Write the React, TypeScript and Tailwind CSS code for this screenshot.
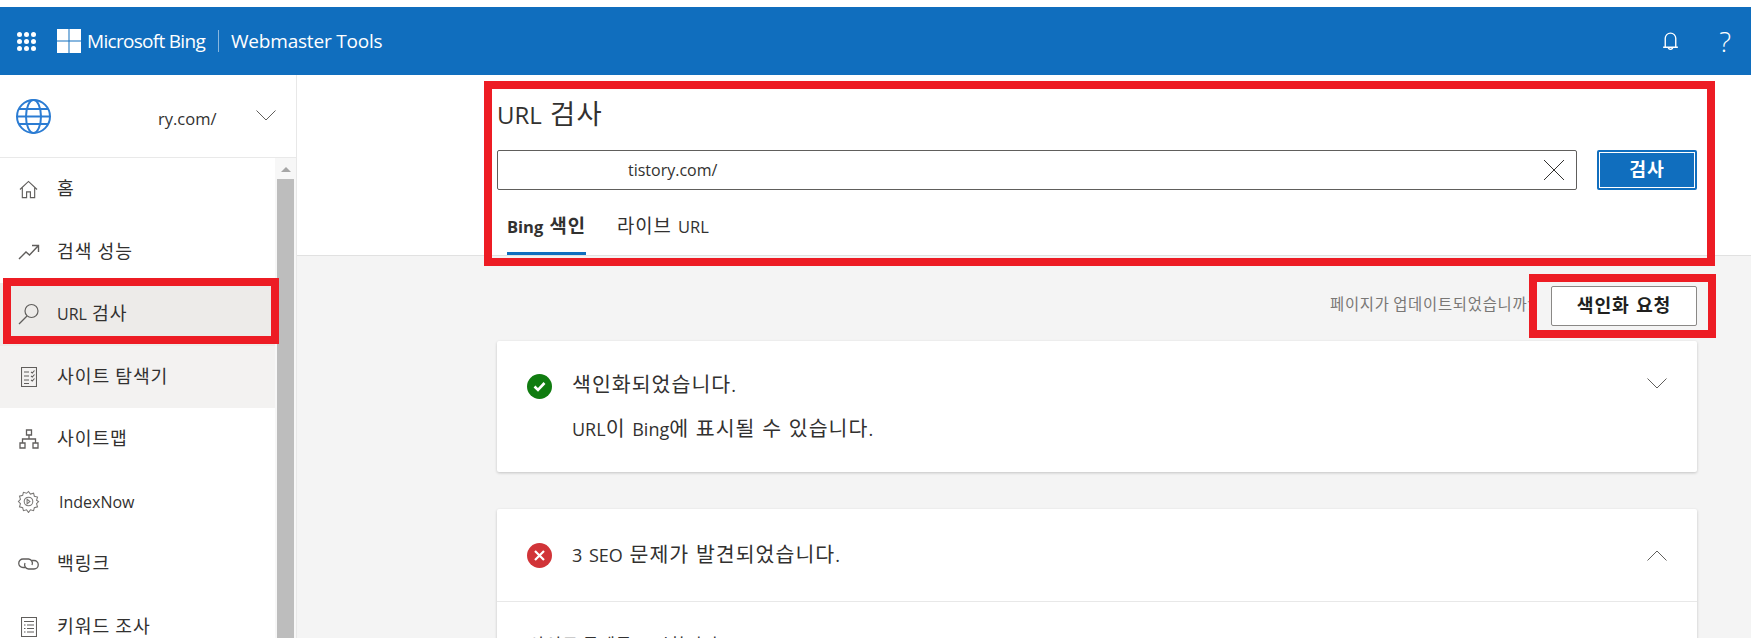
import type { ReactNode } from 'react';

const font = "font-['Open_Sans','Noto_Sans_CJK_KR',sans-serif]";

// hangul runs a bit larger and wider than the latin around them
function Ko({ text }: { text: string }) {
  return (
    <>
      {text.split(/([\uac00-\ud7a3]+)/).map((part, i) =>
        i % 2 === 1 ? (
          <span key={i} className="text-[1.14em] tracking-[0.05em] leading-[1]">
            {part}
          </span>
        ) : (
          part
        ),
      )}
    </>
  );
}

function Chevron({ up, className }: { up?: boolean; className?: string }) {
  return (
    <svg className={className} width="20" height="11" viewBox="0 0 20 11" fill="none" stroke="#605e5c" strokeWidth="1">
      <path d={up ? 'M.5 10.500 10 1l9.500 9.500' : 'M.5.500 10 10 19.500.500'} />
    </svg>
  );
}

function HomeIcon() {
  return (
    <svg width="19" height="19" viewBox="0 0 20 20" fill="none" stroke="#605e5c" strokeWidth="1.2">
      <path d="M1 10 10 1.500 19 10M3.500 8v10.500h4.500v-6h4v6h4.500V8" />
    </svg>
  );
}

function TrendIcon() {
  return (
    <svg width="22" height="16" viewBox="0 0 22 16" fill="none" stroke="#605e5c" strokeWidth="1.4">
      <path d="M1 15 8 8l3.500 3L20 2M14 1.500h6.500V8" />
    </svg>
  );
}

function SearchIcon() {
  return (
    <svg width="22" height="22" viewBox="0 0 22 22" fill="none" stroke="#605e5c" strokeWidth="1.2">
      <circle cx="13.500" cy="8" r="6.500" />
      <path d="M9 13 1 21" />
    </svg>
  );
}

function ExplorerIcon() {
  return (
    <svg width="16" height="20" viewBox="0 0 16 20" fill="none" stroke="#605e5c" strokeWidth="1.1">
      <path d="M.5.500h15v19H.5zM3 5h5M3 9h5M3 13h5M3 16.500h5M10 5l1.300 1L13.500 3.500M10 9l1.300 1 2.200-2.500M10 13l1.300 1 2.200-2.500" />
    </svg>
  );
}

function SitemapIcon() {
  return (
    <svg width="20" height="20" viewBox="0 0 20 20" fill="none" stroke="#605e5c" strokeWidth="1.3">
      <path d="M7.500 1h5v5h-5zM1 14h5v5H1zM14 14h5v5h-5zM10 6v4M3.500 14v-4h13v4" />
    </svg>
  );
}

function GearIcon() {
  return (
    <svg width="23" height="23" viewBox="0 0 24 24" fill="none" stroke="#797775" strokeWidth="1.1">
      <path d="M12 1.500l2 2.800 3.300-1 .8 3.200 3.300.9-1 3.200L22.500 12l-2.100 2.300 1 3.200-3.300.9-.8 3.200-3.300-1-2 2.900-2-2.900-3.300 1-.8-3.200-3.300-.9 1-3.200L1.500 12l2.100-2.300-1-3.200 3.300-.9.800-3.200 3.300 1z" />
      <circle cx="12" cy="12" r="4.500" />
      <path d="M10.500 9.500 13.500 12l-3 2.500z" />
    </svg>
  );
}

function LinkIcon() {
  return (
    <svg width="21" height="14" viewBox="0 0 21 14" fill="none" stroke="#605e5c" strokeWidth="1.3">
      <path d="M7.500 10.500H5A4.200 4.200 0 0 1 5 2h5.500a4.200 4.200 0 0 1 3.500 6" />
      <path d="M13.500 3.500H16a4.200 4.200 0 0 1 0 8.500h-5.500A4.200 4.200 0 0 1 7 6" />
    </svg>
  );
}

function DocIcon() {
  return (
    <svg width="16" height="20" viewBox="0 0 16 20" fill="none" stroke="#605e5c" strokeWidth="1.1">
      <path d="M.5.500h15v19H.5zM3 4.500h10M3 8h1.500M6 8h7M3 11.500h1.500M6 11.500h7M3 15h1.500M6 15h7" />
    </svg>
  );
}

type NavItem = { label: string; icon: ReactNode; bg?: string; indent?: string; marked?: boolean };

const navItems: NavItem[] = [
  { label: '홈', icon: <HomeIcon /> },
  { label: '검색 성능', icon: <TrendIcon /> },
  { label: 'URL 검사', icon: <SearchIcon />, bg: 'bg-[#edebe9]', marked: true },
  { label: '사이트 탐색기', icon: <ExplorerIcon />, bg: 'bg-[#f3f2f1]' },
  { label: '사이트맵', icon: <SitemapIcon /> },
  { label: 'IndexNow', icon: <GearIcon />, indent: 'pl-[2px]' },
  { label: '백링크', icon: <LinkIcon /> },
  { label: '키워드 조사', icon: <DocIcon /> },
];

function Sidebar() {
  return (
    <aside className="w-[297px] shrink-0 border-r border-[#e8e8e8] bg-white flex flex-col overflow-hidden">
      <div className="h-[83px] shrink-0 flex items-center border-b border-[#e9e9e9] pl-[16px] pr-[20px]">
        <svg width="35" height="35" viewBox="0 0 35 35" fill="none" stroke="#2b7cd3" strokeWidth="2">
          <circle cx="17.500" cy="17.500" r="16.500" />
          <ellipse cx="17.500" cy="17.500" rx="7.500" ry="16.500" />
          <path d="M3 10h29M3 25h29M1 17.500h33" />
        </svg>
        <span className="ml-[107px] text-[16.500px] text-[#323130] relative top-[3px]">ry.com/</span>
        <Chevron className="ml-auto -mt-[2px]" />
      </div>
      <div className="flex-1 flex min-h-0">
        <nav className="flex-1 min-w-0">
          {navItems.map((item) => (
            <div key={item.label} className={`relative h-[62.500px] flex items-center ${item.bg ?? ''}`}>
              <span className="w-[57px] shrink-0 flex justify-center">{item.icon}</span>
              <span className={`text-[16px] text-[#323130] [word-spacing:1px] ${item.indent ?? ''}`}>
                <Ko text={item.label} />
              </span>
              {item.marked && (
                <div className="absolute left-[3px] -top-[5px] w-[276px] h-[66px] border-[8px] border-[#ed1c24] z-10" />
              )}
            </div>
          ))}
        </nav>
        <div className="w-[21px] shrink-0 bg-[#f7f7f7] flex flex-col items-center pt-[9px]">
          <div className="w-0 h-0 border-x-[5px] border-x-transparent border-b-[5px] border-b-[#a6a6a6]" />
          <div className="w-[17px] flex-1 mt-[7px] bg-[#bdbdbd]" />
        </div>
      </div>
    </aside>
  );
}

function IndexCard() {
  return (
    <div className="w-[1200px] h-[131px] bg-white rounded-[2px] shadow-[0_1px_3px_rgba(0,0,0,0.2)] flex pt-[30px] pl-[30px] pr-[30px] shrink-0">
      <span className="w-[25px] h-[25px] mt-[3px] rounded-full bg-[#107c10] flex items-center justify-center shrink-0">
        <svg width="13" height="11" viewBox="0 0 13 11" fill="none" stroke="white" strokeWidth="2.600">
          <path d="M1.500 5.500 5 9l6.500-7" />
        </svg>
      </span>
      <div className="ml-[20px] flex-1 text-[18px] text-[#323130] leading-[28px] [word-spacing:2px]">
        <p><Ko text="색인화되었습니다." /></p>
        <p className="mt-[16px]"><Ko text="URL이 Bing에 표시될 수 있습니다." /></p>
      </div>
      <Chevron className="mt-[7px]" />
    </div>
  );
}

function SeoCard() {
  return (
    <div className="w-[1200px] mt-[37px] bg-white rounded-t-[2px] shadow-[0_1px_3px_rgba(0,0,0,0.2)] shrink-0">
      <div className="h-[93px] flex items-center pl-[30px] pr-[30px] border-b border-[#e8e8e8]">
        <span className="w-[25px] h-[25px] rounded-full bg-[#d13438] flex items-center justify-center shrink-0">
          <svg width="11" height="11" viewBox="0 0 11 11" fill="none" stroke="white" strokeWidth="2.200">
            <path d="M1 1l9 9M10 1l-9 9" />
          </svg>
        </span>
        <span className="ml-[20px] flex-1 text-[18px] text-[#323130] [word-spacing:2px]">
          <Ko text="3 SEO 문제가 발견되었습니다." />
        </span>
        <Chevron up />
      </div>
      <p className="pl-[32px] pt-[32px] text-[15px] text-[#323130]">
        <Ko text="사이트 문제를 표시합니다" />
      </p>
    </div>
  );
}

function Main() {
  return (
    <main className="flex-1 min-w-0 flex flex-col bg-[#f4f4f4] overflow-hidden">
      <section className="h-[181px] shrink-0 bg-white border-b border-[#e1e1e1] pl-[200px] pt-[6px]">
        <div className="relative w-[1231px] h-[185px] border-[8px] border-[#ed1c24] -ml-[13px] pl-[5px] pt-[10px] z-10">
          <h1 className="text-[24px] leading-[32px] text-[#323130] [word-spacing:2px]">
            <Ko text="URL 검사" />
          </h1>
          <div className="flex mt-[19px]">
            <div className="w-[1080px] shrink-0 h-[40px] border border-[#605e5c] rounded-[2px] flex items-center justify-between pl-[130px] pr-[12px]">
              <span className="text-[16px] text-[#323130]">tistory.com/</span>
              <svg width="20" height="20" viewBox="0 0 20 20" fill="none" stroke="#323130" strokeWidth="1">
                <path d="M0 0l20 20M20 0 0 20" />
              </svg>
            </div>
            <button className="ml-[20px] w-[100px] shrink-0 h-[40px] bg-[#106ebe] rounded-[2px] outline outline-1 outline-offset-[-3px] outline-white text-white text-[16px] font-bold">
              <Ko text="검사" />
            </button>
          </div>
          <div className="flex mt-[17px] text-[16.500px] text-[#323130] [word-spacing:2px]">
            <div className="ml-[10px] h-[48px] border-b-[3px] border-[#106ebe] font-bold leading-[40px]">
              <Ko text="Bing 색인" />
            </div>
            <div className="ml-[31px] leading-[40px]">
              <Ko text="라이브 URL" />
            </div>
          </div>
        </div>
      </section>
      <div className="pl-[200px] flex flex-col">
        <div className="w-[1200px] flex justify-end items-center h-[85px] shrink-0">
          <span className="w-[199px] overflow-hidden whitespace-nowrap text-[13.500px] text-[#797775] relative top-[7px]">
            <Ko text="페이지가 업데이트되었습니까?" />
          </span>
          <div className="relative border-[8px] border-[#ed1c24] h-[64px] w-[187px] shrink-0 -mr-[19px] flex items-center pl-[14px] mt-[15px]">
            <button className="w-[146px] h-[40px] bg-white border border-[#8a8886] rounded-[2px] text-[16px] font-bold text-[#201f1e] [word-spacing:2px]">
              <Ko text="색인화 요청" />
            </button>
          </div>
        </div>
        <IndexCard />
        <SeoCard />
      </div>
    </main>
  );
}

export default function App() {
  return (
    <div className={`h-[638px] w-[1751px] overflow-hidden bg-white flex flex-col ${font}`}>
      <div className="h-[7px] shrink-0 bg-white" />
      <header className="h-[68px] shrink-0 bg-[#106ebe] flex items-center text-white">
        <div className="ml-[17px] grid grid-cols-3 gap-[2px]">
          {Array.from({ length: 9 }).map((_, i) => (
            <span key={i} className="w-[5px] h-[5px] rounded-full bg-white" />
          ))}
        </div>
        <svg className="ml-[21px]" width="24" height="24" viewBox="0 0 24 24" fill="white">
          <path d="M0 0h11.500v11.500H0zM12.500 0H24v11.500H12.500zM0 12.500h11.500V24H0zM12.500 12.500H24V24H12.500z" />
        </svg>
        <span className="ml-[6px] text-[19px] font-medium tracking-[-0.7px]">Microsoft Bing</span>
        <span className="ml-[13px] w-px h-[22px] bg-white/50" />
        <span className="ml-[12px] text-[19px] font-medium tracking-[-0.2px]">Webmaster Tools</span>
        <svg className="ml-auto" width="17" height="21" viewBox="0 0 16 20" fill="none" stroke="white" strokeWidth="1.300">
          <path d="M3 15V7a5 5 0 0 1 10 0v8M1 15.500h14M6 15.500a2 2 0 0 0 4 0" />
        </svg>
        <span className="ml-[40px] mr-[20px] text-[28px] font-light">?</span>
      </header>
      <div className="flex-1 min-h-0 flex">
        <Sidebar />
        <Main />
      </div>
    </div>
  );
}
